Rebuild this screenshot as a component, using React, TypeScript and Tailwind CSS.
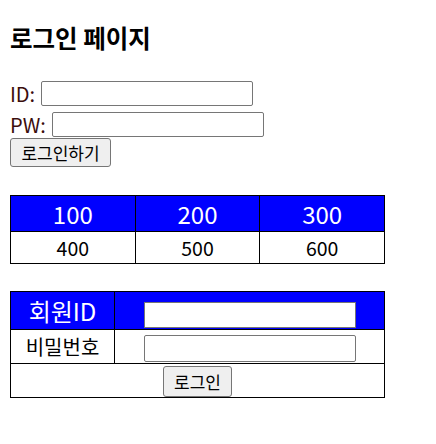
import React from "react";

const font = { fontFamily: '"Noto Sans CJK KR", "Noto Sans", sans-serif' };

export default function App() {
  const inputCls =
    "block w-[212px] h-[25px] border border-[#767676] rounded-[2px] bg-white px-[2px] text-[16px] outline-none";
  return (
    <div className="bg-white w-[436px] h-[444px] pl-[10px] text-black" style={font}>
      <div className="pt-[22px] h-[53px] text-[24.5px] leading-[31px] font-bold">로그인 페이지</div>
      <div className="mt-[28px] flex items-center h-[25px]">
        <span className="w-[31px] text-[20px] leading-[25px] text-[#3b0d0d]">ID:</span>
        <input className={inputCls} />
      </div>
      <div className="mt-[6px] flex items-center h-[25px]">
        <span className="w-[42px] text-[20px] leading-[25px] text-[#3b0d0d]">PW:</span>
        <input className={inputCls} />
      </div>
      <button className="mt-[1px] block w-[101px] h-[29px] border border-[#767676] rounded-[3px] bg-[#efefef] text-[17px] leading-[27px] text-black">
        로그인하기
      </button>

      <table className="mt-[28px] w-[375px] border-collapse table-fixed">
        <tbody>
          <tr className="h-[36px] bg-[#0000ff] text-white text-[24px]">
            <td className="border border-black text-center p-0 leading-[34px]">100</td>
            <td className="border border-black text-center p-0 leading-[34px]">200</td>
            <td className="border border-black text-center p-0 leading-[34px]">300</td>
          </tr>
          <tr className="h-[32px] text-[19.5px]">
            <td className="border border-black text-center p-0 leading-[30px]">400</td>
            <td className="border border-black text-center p-0 leading-[30px]">500</td>
            <td className="border border-black text-center p-0 leading-[30px]">600</td>
          </tr>
        </tbody>
      </table>

      <table className="mt-[27px] w-[375px] border-collapse table-fixed">
        <colgroup>
          <col className="w-[104px]" />
          <col />
        </colgroup>
        <tbody>
          <tr className="h-[38px] bg-[#0000ff]">
            <td className="border border-black text-center p-0 text-white text-[24px] leading-[36px]">회원ID</td>
            <td className="border border-black p-0">
              <div className="flex justify-center pt-[10px] h-[37px]">
                <input className="block w-[212px] h-[26px] border border-[#767676] bg-white outline-none" />
              </div>
            </td>
          </tr>
          <tr className="h-[34px]">
            <td className="border border-black text-center p-0 text-[20px] leading-[32px]">비밀번호</td>
            <td className="border border-black p-0">
              <div className="flex justify-center pt-[5px] h-[33px]">
                <input className="block w-[212px] h-[27px] border border-[#767676] rounded-[2px] bg-white outline-none" />
              </div>
            </td>
          </tr>
          <tr className="h-[34px]">
            <td colSpan={2} className="border border-black p-0">
              <div className="flex justify-center pt-[2px] h-[33px]">
                <button className="block w-[69px] h-[31px] border border-[#767676] rounded-[3px] bg-[#efefef] text-[17px] leading-[29px] text-black">
                  로그인
                </button>
              </div>
            </td>
          </tr>
        </tbody>
      </table>
    </div>
  );
}
